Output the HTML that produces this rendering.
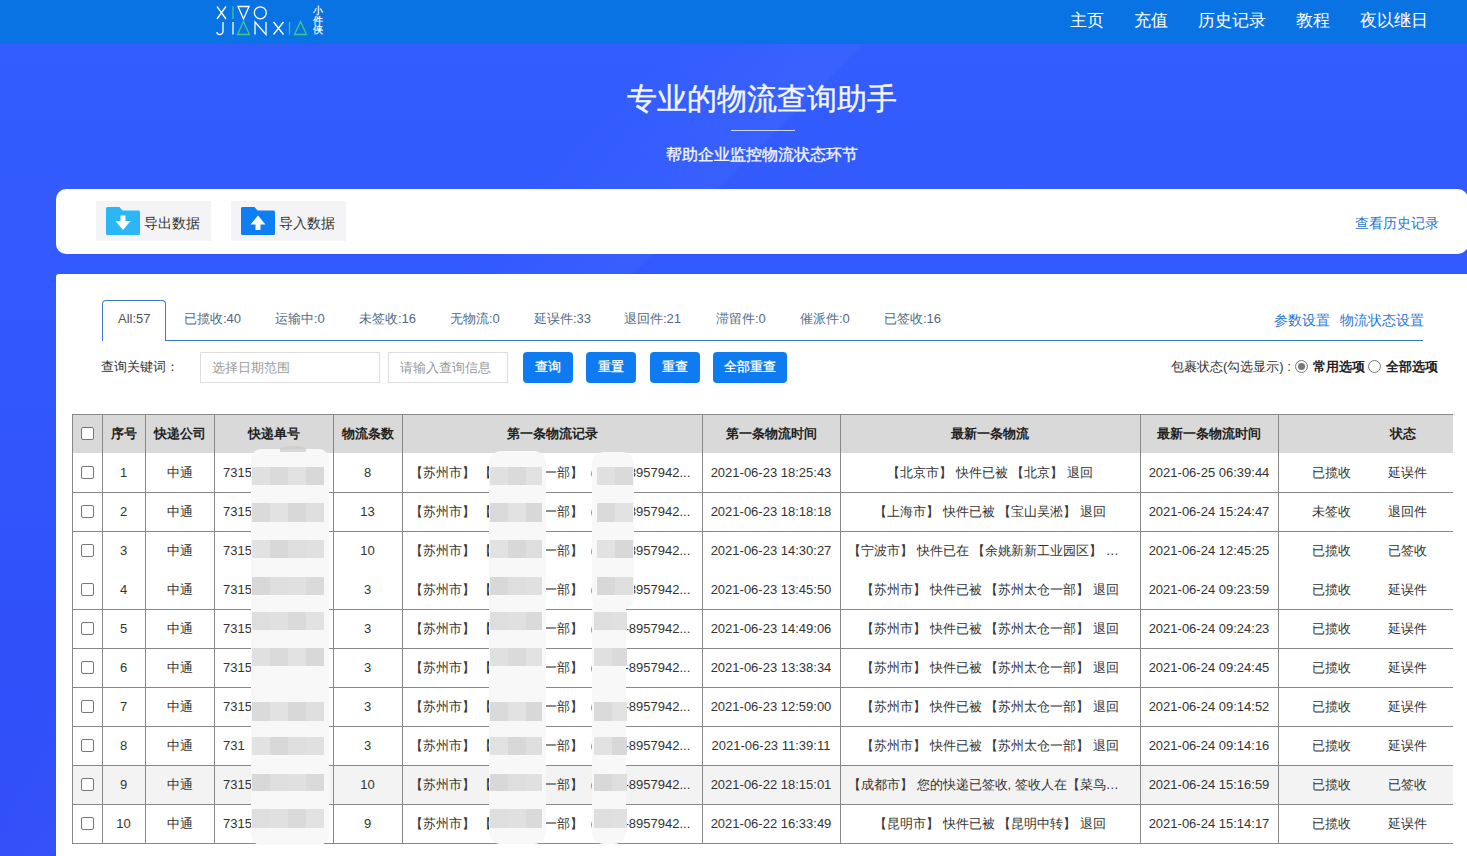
<!DOCTYPE html>
<html><head><meta charset="utf-8">
<style>
*{margin:0;padding:0;box-sizing:border-box}
html,body{width:1467px;height:856px;overflow:hidden}
body{position:relative;font-family:"Liberation Sans",sans-serif;font-size:13px;color:#333;background:#335ffe}
.a{position:absolute;white-space:nowrap}
#hdr{left:0;top:0;width:1467px;height:44px;background:#0a73e3}
.nav{top:1px;height:44px;line-height:40px;font-size:17px;color:#fff}
#hero{left:0;top:44px;width:1467px;height:812px;background:linear-gradient(135deg,rgba(255,255,255,0) 29%,rgba(255,255,255,.03) 37.8%,rgba(255,255,255,0) 37.9%),linear-gradient(180deg,#335dfd 0%,#3259fd 30%,#2f4cf9 100%)}
.title{left:0;width:1524px;text-align:center;color:#f4f6ff;-webkit-text-stroke:.35px #f4f6ff}
.card1{left:56px;top:189px;width:1412px;height:65px;background:#fff;border-radius:10px}
.card2{left:56px;top:274px;width:1430px;height:600px;background:#fff;border-radius:3px}
.btn1{top:201px;height:40px;background:#f4f4f6}
.btxt{top:214px;line-height:18px;font-size:14px;color:#333}
.tab{top:299px;height:40px;line-height:40px;color:#4f6a88;font-size:13px}
.qbtn{top:352px;height:31px;line-height:30px;background:#0e7cf0;color:#fff;border-radius:4px;text-align:center;font-size:13px;-webkit-text-stroke:.3px #fff}
.hl{left:72px;width:1381px;height:1px;background:#888}
.vl{top:414px;width:1px;height:430px;background:#888}
.c{height:39px;line-height:39px;text-align:center;color:#333}
.h{font-weight:bold;color:#222}
.cb{width:13px;height:13px;border:1px solid #777;border-radius:2px;background:#fff}
</style></head><body>
<div id="hero" class="a"></div>
<div id="hdr" class="a"></div>
<!-- logo -->
<svg class="a" style="left:214px;top:4px" width="112" height="34" viewBox="0 0 112 34">
 <g fill="none" stroke="#fff" stroke-width="1.3">
  <path d="M3 2.5 L12 15 M12 2.5 L3 15"/>
  <path d="M24 2.5 L35 2.5 L29.5 15 Z"/>
  <circle cx="46.3" cy="8.8" r="6"/>
  <path d="M9 18 V27 Q9 30.5 5.5 30.5 Q3 30.5 3 28"/>
  <path d="M19 18 V30.5"/>
  <path d="M41 30.5 V18 L52 30.5 V18"/>
  <path d="M59.5 18 L69.5 30.5 M69.5 18 L59.5 30.5"/>
 </g>
 <g fill="none" stroke="#3cc98a" stroke-width="1.3">
  <path d="M19 2.5 V15"/>
  <path d="M29.5 17.5 L35.5 30.5 L23.5 30.5 Z"/>
  <path d="M75.5 18 V30.5"/>
  <path d="M86.5 17.5 L92.5 30.5 L80.5 30.5 Z"/>
 </g>
</svg>
<div class="a" style="left:313px;top:5px;font-size:10px;line-height:12px;color:#fff;-webkit-text-stroke:.2px #fff">小</div><div class="a" style="left:313px;top:14.5px;font-size:10px;line-height:12px;color:#fff;-webkit-text-stroke:.2px #fff">件</div><div class="a" style="left:313px;top:24px;font-size:10px;line-height:12px;color:#fff;-webkit-text-stroke:.2px #fff">侠</div>
<div class="a nav" style="left:1070px">主页</div>
<div class="a nav" style="left:1134px">充值</div>
<div class="a nav" style="left:1198px">历史记录</div>
<div class="a nav" style="left:1296px">教程</div>
<div class="a nav" style="left:1360px">夜以继日</div>

<div class="a title" style="top:79px;font-size:30px;line-height:40px">专业的物流查询助手</div>
<div class="a" style="left:731px;top:130px;width:64px;height:1px;background:rgba(255,255,255,.75)"></div>
<div class="a title" style="top:145px;font-size:16px;line-height:20px">帮助企业监控物流状态环节</div>

<div class="a card1"></div>
<div class="a btn1" style="left:96px;width:115px"></div>
<div class="a btn1" style="left:231px;width:115px"></div>
<svg class="a" style="left:106px;top:207px" width="34" height="28" viewBox="0 0 34 28">
 <path d="M1.5 0 H13.5 L16.5 3.5 H32.5 Q34 3.5 34 5 V26.5 Q34 28 32.5 28 H1.5 Q0 28 0 26.5 V1.5 Q0 0 1.5 0 Z" fill="#2bb6f6"/>
 <path d="M14.5 8.5 H19.5 V14 H24.5 L17 23 L9.5 14 H14.5 Z" fill="#fff"/>
</svg>
<div class="a btxt" style="left:144px">导出数据</div>
<svg class="a" style="left:241px;top:207px" width="34" height="28" viewBox="0 0 34 28">
 <path d="M1.5 0 H13.5 L16.5 3.5 H32.5 Q34 3.5 34 5 V26.5 Q34 28 32.5 28 H1.5 Q0 28 0 26.5 V1.5 Q0 0 1.5 0 Z" fill="#0e7ef2"/>
 <path d="M14.5 23 H19.5 V17.5 H24.5 L17 8.5 L9.5 17.5 H14.5 Z" fill="#fff"/>
</svg>
<div class="a btxt" style="left:279px">导入数据</div>
<div class="a" style="left:1355px;top:213px;line-height:20px;font-size:14px;color:#2a72d0">查看历史记录</div>

<div class="a card2"></div>
<div class="a" style="left:102px;top:340px;width:1321px;height:1px;background:#3a7ac8"></div>
<div class="a" style="left:102px;top:300px;width:64px;height:41px;background:#fff;border:1px solid #3a7ac8;border-bottom:none;border-radius:4px 4px 0 0"></div>
<div class="a tab" style="left:118px;color:#555">All:57</div>
<div class="a tab" style="left:184px;color:#4f6a88">已揽收:40</div>
<div class="a tab" style="left:275px;color:#4f6a88">运输中:0</div>
<div class="a tab" style="left:359px;color:#4f6a88">未签收:16</div>
<div class="a tab" style="left:450px;color:#4f6a88">无物流:0</div>
<div class="a tab" style="left:534px;color:#4f6a88">延误件:33</div>
<div class="a tab" style="left:624px;color:#4f6a88">退回件:21</div>
<div class="a tab" style="left:716px;color:#4f6a88">滞留件:0</div>
<div class="a tab" style="left:800px;color:#4f6a88">催派件:0</div>
<div class="a tab" style="left:884px;color:#4f6a88">已签收:16</div>
<div class="a" style="left:1274px;top:310px;line-height:20px;font-size:14px;color:#2d78d6">参数设置</div>
<div class="a" style="left:1340px;top:310px;line-height:20px;font-size:14px;color:#2d78d6">物流状态设置</div>
<div class="a" style="left:101px;top:357px;line-height:20px;color:#333">查询关键词：</div>
<div class="a" style="left:200px;top:352px;width:180px;height:31px;border:1px solid #ddd;background:#fff"></div>
<div class="a" style="left:212px;top:358px;line-height:20px;color:#999">选择日期范围</div>
<div class="a" style="left:388px;top:352px;width:120px;height:31px;border:1px solid #ddd;background:#fff"></div>
<div class="a" style="left:400px;top:358px;line-height:20px;color:#999">请输入查询信息</div>
<div class="a qbtn" style="left:523px;width:50px">查询</div>
<div class="a qbtn" style="left:586px;width:50px">重置</div>
<div class="a qbtn" style="left:650px;width:50px">重查</div>
<div class="a qbtn" style="left:713px;width:74px">全部重查</div>
<div class="a" style="left:1171px;top:357px;line-height:20px;color:#333">包裹状态(勾选显示) :</div>
<div class="a" style="left:1295px;top:360px;width:13px;height:13px;border:1px solid #777;border-radius:50%;background:#fff"></div>
<div class="a" style="left:1298px;top:363px;width:7px;height:7px;border-radius:50%;background:#777"></div>
<div class="a" style="left:1313px;top:357px;line-height:20px;color:#222;font-weight:bold">常用选项</div>
<div class="a" style="left:1368px;top:360px;width:13px;height:13px;border:1px solid #777;border-radius:50%;background:#fff"></div>
<div class="a" style="left:1386px;top:357px;line-height:20px;color:#222;font-weight:bold">全部选项</div>
<div class="a" style="left:72px;top:414px;width:1381px;height:39px;background:#d9d9d9"></div>
<div class="a" style="left:73px;top:765px;width:1380px;height:39px;background:#f3f3f3"></div>
<div class="a hl" style="top:414px"></div>
<div class="a hl" style="top:492px"></div>
<div class="a hl" style="top:531px"></div>
<div class="a hl" style="top:609px"></div>
<div class="a hl" style="top:648px"></div>
<div class="a hl" style="top:687px"></div>
<div class="a hl" style="top:726px"></div>
<div class="a hl" style="top:765px"></div>
<div class="a hl" style="top:804px"></div>
<div class="a hl" style="top:843px"></div>
<div class="a vl" style="left:72px"></div>
<div class="a vl" style="left:102px"></div>
<div class="a vl" style="left:145px"></div>
<div class="a vl" style="left:214px"></div>
<div class="a vl" style="left:333px"></div>
<div class="a vl" style="left:402px"></div>
<div class="a vl" style="left:702px"></div>
<div class="a vl" style="left:840px"></div>
<div class="a vl" style="left:1140px"></div>
<div class="a vl" style="left:1278px"></div>
<div class="a cb" style="left:81px;top:427px"></div>
<div class="a c h" style="left:102px;top:414px;width:43px;">序号</div>
<div class="a c h" style="left:145px;top:414px;width:69px;">快递公司</div>
<div class="a c h" style="left:214px;top:414px;width:119px;">快递单号</div>
<div class="a c h" style="left:333px;top:414px;width:69px;">物流条数</div>
<div class="a c h" style="left:402px;top:414px;width:300px;">第一条物流记录</div>
<div class="a c h" style="left:702px;top:414px;width:138px;">第一条物流时间</div>
<div class="a c h" style="left:840px;top:414px;width:300px;">最新一条物流</div>
<div class="a c h" style="left:1140px;top:414px;width:138px;">最新一条物流时间</div>
<div class="a c h" style="left:1353px;top:414px;width:100px;">状态</div>
<div class="a cb" style="left:81px;top:466px"></div>
<div class="a c" style="left:102px;top:453px;width:43px;">1</div>
<div class="a c" style="left:145px;top:453px;width:69px;">中通</div>
<div class="a c" style="left:223px;top:453px;width:110px;text-align:left">7315</div>
<div class="a c" style="left:333px;top:453px;width:69px;">8</div>
<div class="a c" style="left:410px;top:453px;width:292px;text-align:left">【苏州市】 【苏州太仓一部】（0512-8957942...</div>
<div class="a c" style="left:702px;top:453px;width:138px;">2021-06-23 18:25:43</div>
<div class="a c" style="left:840px;top:453px;width:300px;">【北京市】 快件已被 【北京】 退回</div>
<div class="a c" style="left:1140px;top:453px;width:138px;">2021-06-25 06:39:44</div>
<div class="a c" style="left:1281px;top:453px;width:100px;">已揽收</div>
<div class="a c" style="left:1357px;top:453px;width:100px;">延误件</div>
<div class="a cb" style="left:81px;top:505px"></div>
<div class="a c" style="left:102px;top:492px;width:43px;">2</div>
<div class="a c" style="left:145px;top:492px;width:69px;">中通</div>
<div class="a c" style="left:223px;top:492px;width:110px;text-align:left">7315</div>
<div class="a c" style="left:333px;top:492px;width:69px;">13</div>
<div class="a c" style="left:410px;top:492px;width:292px;text-align:left">【苏州市】 【苏州太仓一部】（0512-8957942...</div>
<div class="a c" style="left:702px;top:492px;width:138px;">2021-06-23 18:18:18</div>
<div class="a c" style="left:840px;top:492px;width:300px;">【上海市】 快件已被 【宝山吴淞】 退回</div>
<div class="a c" style="left:1140px;top:492px;width:138px;">2021-06-24 15:24:47</div>
<div class="a c" style="left:1281px;top:492px;width:100px;">未签收</div>
<div class="a c" style="left:1357px;top:492px;width:100px;">退回件</div>
<div class="a cb" style="left:81px;top:544px"></div>
<div class="a c" style="left:102px;top:531px;width:43px;">3</div>
<div class="a c" style="left:145px;top:531px;width:69px;">中通</div>
<div class="a c" style="left:223px;top:531px;width:110px;text-align:left">7315</div>
<div class="a c" style="left:333px;top:531px;width:69px;">10</div>
<div class="a c" style="left:410px;top:531px;width:292px;text-align:left">【苏州市】 【苏州太仓一部】（0512-8957942...</div>
<div class="a c" style="left:702px;top:531px;width:138px;">2021-06-23 14:30:27</div>
<div class="a c" style="left:848px;top:531px;width:284px;text-align:left;overflow:hidden">【宁波市】 快件已在 【余姚新新工业园区】 …</div>
<div class="a c" style="left:1140px;top:531px;width:138px;">2021-06-24 12:45:25</div>
<div class="a c" style="left:1281px;top:531px;width:100px;">已揽收</div>
<div class="a c" style="left:1357px;top:531px;width:100px;">已签收</div>
<div class="a cb" style="left:81px;top:583px"></div>
<div class="a c" style="left:102px;top:570px;width:43px;">4</div>
<div class="a c" style="left:145px;top:570px;width:69px;">中通</div>
<div class="a c" style="left:223px;top:570px;width:110px;text-align:left">7315</div>
<div class="a c" style="left:333px;top:570px;width:69px;">3</div>
<div class="a c" style="left:410px;top:570px;width:292px;text-align:left">【苏州市】 【苏州太仓一部】（0512-8957942...</div>
<div class="a c" style="left:702px;top:570px;width:138px;">2021-06-23 13:45:50</div>
<div class="a c" style="left:840px;top:570px;width:300px;">【苏州市】 快件已被 【苏州太仓一部】 退回</div>
<div class="a c" style="left:1140px;top:570px;width:138px;">2021-06-24 09:23:59</div>
<div class="a c" style="left:1281px;top:570px;width:100px;">已揽收</div>
<div class="a c" style="left:1357px;top:570px;width:100px;">延误件</div>
<div class="a cb" style="left:81px;top:622px"></div>
<div class="a c" style="left:102px;top:609px;width:43px;">5</div>
<div class="a c" style="left:145px;top:609px;width:69px;">中通</div>
<div class="a c" style="left:223px;top:609px;width:110px;text-align:left">7315</div>
<div class="a c" style="left:333px;top:609px;width:69px;">3</div>
<div class="a c" style="left:410px;top:609px;width:292px;text-align:left">【苏州市】 【苏州太仓一部】（0512-8957942...</div>
<div class="a c" style="left:702px;top:609px;width:138px;">2021-06-23 14:49:06</div>
<div class="a c" style="left:840px;top:609px;width:300px;">【苏州市】 快件已被 【苏州太仓一部】 退回</div>
<div class="a c" style="left:1140px;top:609px;width:138px;">2021-06-24 09:24:23</div>
<div class="a c" style="left:1281px;top:609px;width:100px;">已揽收</div>
<div class="a c" style="left:1357px;top:609px;width:100px;">延误件</div>
<div class="a cb" style="left:81px;top:661px"></div>
<div class="a c" style="left:102px;top:648px;width:43px;">6</div>
<div class="a c" style="left:145px;top:648px;width:69px;">中通</div>
<div class="a c" style="left:223px;top:648px;width:110px;text-align:left">7315</div>
<div class="a c" style="left:333px;top:648px;width:69px;">3</div>
<div class="a c" style="left:410px;top:648px;width:292px;text-align:left">【苏州市】 【苏州太仓一部】（0512-8957942...</div>
<div class="a c" style="left:702px;top:648px;width:138px;">2021-06-23 13:38:34</div>
<div class="a c" style="left:840px;top:648px;width:300px;">【苏州市】 快件已被 【苏州太仓一部】 退回</div>
<div class="a c" style="left:1140px;top:648px;width:138px;">2021-06-24 09:24:45</div>
<div class="a c" style="left:1281px;top:648px;width:100px;">已揽收</div>
<div class="a c" style="left:1357px;top:648px;width:100px;">延误件</div>
<div class="a cb" style="left:81px;top:700px"></div>
<div class="a c" style="left:102px;top:687px;width:43px;">7</div>
<div class="a c" style="left:145px;top:687px;width:69px;">中通</div>
<div class="a c" style="left:223px;top:687px;width:110px;text-align:left">7315</div>
<div class="a c" style="left:333px;top:687px;width:69px;">3</div>
<div class="a c" style="left:410px;top:687px;width:292px;text-align:left">【苏州市】 【苏州太仓一部】（0512-8957942...</div>
<div class="a c" style="left:702px;top:687px;width:138px;">2021-06-23 12:59:00</div>
<div class="a c" style="left:840px;top:687px;width:300px;">【苏州市】 快件已被 【苏州太仓一部】 退回</div>
<div class="a c" style="left:1140px;top:687px;width:138px;">2021-06-24 09:14:52</div>
<div class="a c" style="left:1281px;top:687px;width:100px;">已揽收</div>
<div class="a c" style="left:1357px;top:687px;width:100px;">延误件</div>
<div class="a cb" style="left:81px;top:739px"></div>
<div class="a c" style="left:102px;top:726px;width:43px;">8</div>
<div class="a c" style="left:145px;top:726px;width:69px;">中通</div>
<div class="a c" style="left:223px;top:726px;width:110px;text-align:left">731</div>
<div class="a c" style="left:333px;top:726px;width:69px;">3</div>
<div class="a c" style="left:410px;top:726px;width:292px;text-align:left">【苏州市】 【苏州太仓一部】（0512-8957942...</div>
<div class="a c" style="left:702px;top:726px;width:138px;">2021-06-23 11:39:11</div>
<div class="a c" style="left:840px;top:726px;width:300px;">【苏州市】 快件已被 【苏州太仓一部】 退回</div>
<div class="a c" style="left:1140px;top:726px;width:138px;">2021-06-24 09:14:16</div>
<div class="a c" style="left:1281px;top:726px;width:100px;">已揽收</div>
<div class="a c" style="left:1357px;top:726px;width:100px;">延误件</div>
<div class="a cb" style="left:81px;top:778px"></div>
<div class="a c" style="left:102px;top:765px;width:43px;">9</div>
<div class="a c" style="left:145px;top:765px;width:69px;">中通</div>
<div class="a c" style="left:223px;top:765px;width:110px;text-align:left">7315</div>
<div class="a c" style="left:333px;top:765px;width:69px;">10</div>
<div class="a c" style="left:410px;top:765px;width:292px;text-align:left">【苏州市】 【苏州太仓一部】（0512-8957942...</div>
<div class="a c" style="left:702px;top:765px;width:138px;">2021-06-22 18:15:01</div>
<div class="a c" style="left:848px;top:765px;width:284px;text-align:left;overflow:hidden">【成都市】 您的快递已签收, 签收人在【菜鸟…</div>
<div class="a c" style="left:1140px;top:765px;width:138px;">2021-06-24 15:16:59</div>
<div class="a c" style="left:1281px;top:765px;width:100px;">已揽收</div>
<div class="a c" style="left:1357px;top:765px;width:100px;">已签收</div>
<div class="a cb" style="left:81px;top:817px"></div>
<div class="a c" style="left:102px;top:804px;width:43px;">10</div>
<div class="a c" style="left:145px;top:804px;width:69px;">中通</div>
<div class="a c" style="left:223px;top:804px;width:110px;text-align:left">7315</div>
<div class="a c" style="left:333px;top:804px;width:69px;">9</div>
<div class="a c" style="left:410px;top:804px;width:292px;text-align:left">【苏州市】 【苏州太仓一部】（0512-8957942...</div>
<div class="a c" style="left:702px;top:804px;width:138px;">2021-06-22 16:33:49</div>
<div class="a c" style="left:840px;top:804px;width:300px;">【昆明市】 快件已被 【昆明中转】 退回</div>
<div class="a c" style="left:1140px;top:804px;width:138px;">2021-06-24 15:14:17</div>
<div class="a c" style="left:1281px;top:804px;width:100px;">已揽收</div>
<div class="a c" style="left:1357px;top:804px;width:100px;">延误件</div>
<div class="a" style="left:251px;top:449px;width:78px;height:396px;background:#f8f8f8;border-radius:10px"></div>
<div class="a" style="left:252px;top:467px;width:18px;height:18px;background:#e0e0e0"></div>
<div class="a" style="left:270px;top:467px;width:18px;height:18px;background:#dadada"></div>
<div class="a" style="left:288px;top:467px;width:18px;height:18px;background:#e2e2e2"></div>
<div class="a" style="left:306px;top:467px;width:18px;height:18px;background:#d8d8d8"></div>
<div class="a" style="left:252px;top:503px;width:18px;height:19px;background:#dadada"></div>
<div class="a" style="left:270px;top:503px;width:18px;height:19px;background:#e2e2e2"></div>
<div class="a" style="left:288px;top:503px;width:18px;height:19px;background:#d8d8d8"></div>
<div class="a" style="left:306px;top:503px;width:18px;height:19px;background:#dedede"></div>
<div class="a" style="left:252px;top:540px;width:18px;height:18px;background:#e2e2e2"></div>
<div class="a" style="left:270px;top:540px;width:18px;height:18px;background:#d8d8d8"></div>
<div class="a" style="left:288px;top:540px;width:18px;height:18px;background:#dedede"></div>
<div class="a" style="left:306px;top:540px;width:18px;height:18px;background:#e0e0e0"></div>
<div class="a" style="left:252px;top:577px;width:18px;height:18px;background:#d8d8d8"></div>
<div class="a" style="left:270px;top:577px;width:18px;height:18px;background:#dedede"></div>
<div class="a" style="left:288px;top:577px;width:18px;height:18px;background:#e0e0e0"></div>
<div class="a" style="left:306px;top:577px;width:18px;height:18px;background:#dadada"></div>
<div class="a" style="left:252px;top:612px;width:18px;height:18px;background:#dedede"></div>
<div class="a" style="left:270px;top:612px;width:18px;height:18px;background:#e0e0e0"></div>
<div class="a" style="left:288px;top:612px;width:18px;height:18px;background:#dadada"></div>
<div class="a" style="left:306px;top:612px;width:18px;height:18px;background:#e2e2e2"></div>
<div class="a" style="left:252px;top:648px;width:18px;height:18px;background:#e0e0e0"></div>
<div class="a" style="left:270px;top:648px;width:18px;height:18px;background:#dadada"></div>
<div class="a" style="left:288px;top:648px;width:18px;height:18px;background:#e2e2e2"></div>
<div class="a" style="left:306px;top:648px;width:18px;height:18px;background:#d8d8d8"></div>
<div class="a" style="left:252px;top:702px;width:18px;height:19px;background:#dadada"></div>
<div class="a" style="left:270px;top:702px;width:18px;height:19px;background:#e2e2e2"></div>
<div class="a" style="left:288px;top:702px;width:18px;height:19px;background:#d8d8d8"></div>
<div class="a" style="left:306px;top:702px;width:18px;height:19px;background:#dedede"></div>
<div class="a" style="left:252px;top:737px;width:18px;height:18px;background:#e2e2e2"></div>
<div class="a" style="left:270px;top:737px;width:18px;height:18px;background:#d8d8d8"></div>
<div class="a" style="left:288px;top:737px;width:18px;height:18px;background:#dedede"></div>
<div class="a" style="left:306px;top:737px;width:18px;height:18px;background:#e0e0e0"></div>
<div class="a" style="left:252px;top:774px;width:18px;height:17px;background:#d8d8d8"></div>
<div class="a" style="left:270px;top:774px;width:18px;height:17px;background:#dedede"></div>
<div class="a" style="left:288px;top:774px;width:18px;height:17px;background:#e0e0e0"></div>
<div class="a" style="left:306px;top:774px;width:18px;height:17px;background:#dadada"></div>
<div class="a" style="left:252px;top:809px;width:18px;height:19px;background:#dedede"></div>
<div class="a" style="left:270px;top:809px;width:18px;height:19px;background:#e0e0e0"></div>
<div class="a" style="left:288px;top:809px;width:18px;height:19px;background:#dadada"></div>
<div class="a" style="left:306px;top:809px;width:18px;height:19px;background:#e2e2e2"></div>
<div class="a" style="left:489px;top:451px;width:57px;height:393px;background:#f8f8f8;border-radius:12px"></div>
<div class="a" style="left:490px;top:467px;width:18px;height:18px;background:#e0e0e0"></div>
<div class="a" style="left:508px;top:467px;width:18px;height:18px;background:#dadada"></div>
<div class="a" style="left:526px;top:467px;width:16px;height:18px;background:#e2e2e2"></div>
<div class="a" style="left:490px;top:503px;width:18px;height:19px;background:#dadada"></div>
<div class="a" style="left:508px;top:503px;width:18px;height:19px;background:#e2e2e2"></div>
<div class="a" style="left:526px;top:503px;width:16px;height:19px;background:#d8d8d8"></div>
<div class="a" style="left:490px;top:540px;width:18px;height:18px;background:#e2e2e2"></div>
<div class="a" style="left:508px;top:540px;width:18px;height:18px;background:#d8d8d8"></div>
<div class="a" style="left:526px;top:540px;width:16px;height:18px;background:#dedede"></div>
<div class="a" style="left:490px;top:577px;width:18px;height:18px;background:#d8d8d8"></div>
<div class="a" style="left:508px;top:577px;width:18px;height:18px;background:#dedede"></div>
<div class="a" style="left:526px;top:577px;width:16px;height:18px;background:#e0e0e0"></div>
<div class="a" style="left:490px;top:612px;width:18px;height:18px;background:#dedede"></div>
<div class="a" style="left:508px;top:612px;width:18px;height:18px;background:#e0e0e0"></div>
<div class="a" style="left:526px;top:612px;width:16px;height:18px;background:#dadada"></div>
<div class="a" style="left:490px;top:648px;width:18px;height:18px;background:#e0e0e0"></div>
<div class="a" style="left:508px;top:648px;width:18px;height:18px;background:#dadada"></div>
<div class="a" style="left:526px;top:648px;width:16px;height:18px;background:#e2e2e2"></div>
<div class="a" style="left:490px;top:702px;width:18px;height:19px;background:#dadada"></div>
<div class="a" style="left:508px;top:702px;width:18px;height:19px;background:#e2e2e2"></div>
<div class="a" style="left:526px;top:702px;width:16px;height:19px;background:#d8d8d8"></div>
<div class="a" style="left:490px;top:737px;width:18px;height:18px;background:#e2e2e2"></div>
<div class="a" style="left:508px;top:737px;width:18px;height:18px;background:#d8d8d8"></div>
<div class="a" style="left:526px;top:737px;width:16px;height:18px;background:#dedede"></div>
<div class="a" style="left:490px;top:774px;width:18px;height:17px;background:#d8d8d8"></div>
<div class="a" style="left:508px;top:774px;width:18px;height:17px;background:#dedede"></div>
<div class="a" style="left:526px;top:774px;width:16px;height:17px;background:#e0e0e0"></div>
<div class="a" style="left:490px;top:809px;width:18px;height:19px;background:#dedede"></div>
<div class="a" style="left:508px;top:809px;width:18px;height:19px;background:#e0e0e0"></div>
<div class="a" style="left:526px;top:809px;width:16px;height:19px;background:#dadada"></div>
<div class="a" style="left:592px;top:452px;width:42px;height:157px;background:#f8f8f8;border-radius:12px"></div>
<div class="a" style="left:592px;top:598px;width:34px;height:246px;background:#f8f8f8;border-radius:12px"></div>
<div class="a" style="left:597px;top:467px;width:18px;height:18px;background:#e0e0e0"></div>
<div class="a" style="left:615px;top:467px;width:18px;height:18px;background:#dadada"></div>
<div class="a" style="left:597px;top:503px;width:18px;height:19px;background:#dadada"></div>
<div class="a" style="left:615px;top:503px;width:18px;height:19px;background:#e2e2e2"></div>
<div class="a" style="left:597px;top:540px;width:18px;height:18px;background:#e2e2e2"></div>
<div class="a" style="left:615px;top:540px;width:18px;height:18px;background:#d8d8d8"></div>
<div class="a" style="left:597px;top:577px;width:18px;height:18px;background:#d8d8d8"></div>
<div class="a" style="left:615px;top:577px;width:18px;height:18px;background:#dedede"></div>
<div class="a" style="left:594px;top:612px;width:18px;height:18px;background:#dedede"></div>
<div class="a" style="left:612px;top:612px;width:15px;height:18px;background:#e0e0e0"></div>
<div class="a" style="left:594px;top:648px;width:18px;height:18px;background:#e0e0e0"></div>
<div class="a" style="left:612px;top:648px;width:15px;height:18px;background:#dadada"></div>
<div class="a" style="left:594px;top:702px;width:18px;height:19px;background:#dadada"></div>
<div class="a" style="left:612px;top:702px;width:15px;height:19px;background:#e2e2e2"></div>
<div class="a" style="left:594px;top:737px;width:18px;height:18px;background:#e2e2e2"></div>
<div class="a" style="left:612px;top:737px;width:15px;height:18px;background:#d8d8d8"></div>
<div class="a" style="left:594px;top:774px;width:18px;height:17px;background:#d8d8d8"></div>
<div class="a" style="left:612px;top:774px;width:15px;height:17px;background:#dedede"></div>
<div class="a" style="left:594px;top:809px;width:18px;height:19px;background:#dedede"></div>
<div class="a" style="left:612px;top:809px;width:15px;height:19px;background:#e0e0e0"></div>
<div class="a" style="left:280px;top:446px;width:26px;height:6px;background:#c9c9c9;border-radius:50% 50% 0 0;opacity:.7"></div>
</body></html>
